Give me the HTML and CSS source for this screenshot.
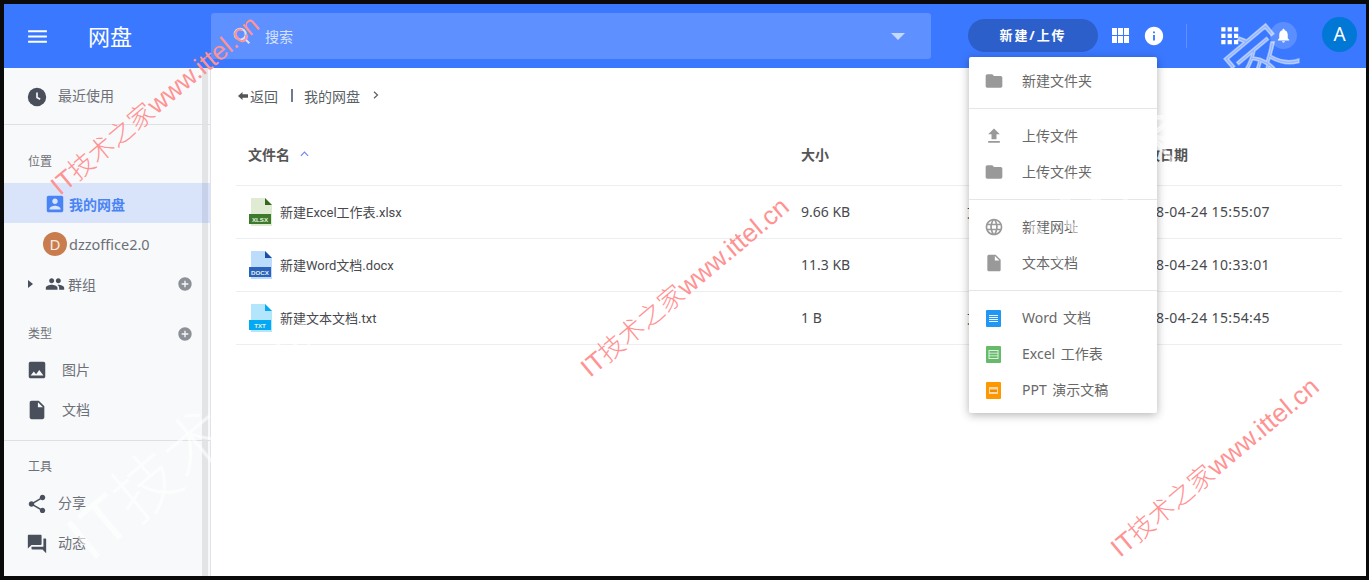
FILE: index.html
```html
<!DOCTYPE html>
<html lang="en">
<head>
  <meta charset="UTF-8">
  <title>网盘</title>
  <link rel="stylesheet" href="styles.css">
</head>
<body>
<svg class="defs">
  <symbol id="i-menu" viewBox="0 0 24 24"><path d="M3 18h18v-2H3v2zm0-5h18v-2H3v2zm0-7v2h18V6H3z"/></symbol>
  <symbol id="i-box" viewBox="0 0 24 24"><path d="M3 5v14c0 1.1.89 2 2 2h14c1.1 0 2-.9 2-2V5c0-1.1-.9-2-2-2H5c-1.11 0-2 .9-2 2zm12 4c0 1.66-1.34 3-3 3s-3-1.34-3-3 1.34-3 3-3 3 1.34 3 3zm-9 8c0-2 4-3.1 6-3.1s6 1.1 6 3.1v1H6v-1z"/></symbol>
  <symbol id="i-people" viewBox="0 0 24 24"><path d="M16 11c1.66 0 2.99-1.34 2.99-3S17.66 5 16 5c-1.66 0-3 1.34-3 3s1.34 3 3 3zm-8 0c1.66 0 2.99-1.34 2.99-3S9.66 5 8 5C6.34 5 5 6.34 5 8s1.34 3 3 3zm0 2c-2.33 0-7 1.17-7 3.5V19h14v-2.5c0-2.33-4.67-3.5-7-3.5zm8 0c-.29 0-.62.02-.97.05 1.16.84 1.97 1.97 1.97 3.45V19h6v-2.5c0-2.33-4.67-3.5-7-3.5z"/></symbol>
  <symbol id="i-add" viewBox="0 0 24 24"><path d="M12 2C6.48 2 2 6.48 2 12s4.48 10 10 10 10-4.48 10-10S17.52 2 12 2zm5 11h-4v4h-2v-4H7v-2h4V7h2v4h4v2z"/></symbol>
  <symbol id="i-photo" viewBox="0 0 24 24"><path d="M21 19V5c0-1.1-.9-2-2-2H5c-1.1 0-2 .9-2 2v14c0 1.1.9 2 2 2h14c1.1 0 2-.9 2-2zM8.5 13.5l2.5 3.01L14.5 12l4.5 6H5l3.5-4.5z"/></symbol>
  <symbol id="i-file" viewBox="0 0 24 24"><path d="M6 2c-1.1 0-1.99.9-1.99 2L4 20c0 1.1.89 2 1.99 2H18c1.1 0 2-.9 2-2V8l-6-6H6zm7 7V3.5L18.5 9H13z"/></symbol>
  <symbol id="i-share" viewBox="0 0 24 24"><path d="M18 16.08c-.76 0-1.44.3-1.96.77L8.91 12.7c.05-.23.09-.46.09-.7s-.04-.47-.09-.7l7.05-4.11c.54.5 1.25.81 2.04.81 1.66 0 3-1.34 3-3s-1.34-3-3-3-3 1.34-3 3c0 .24.04.47.09.7L8.04 9.81C7.5 9.31 6.79 9 6 9c-1.66 0-3 1.34-3 3s1.34 3 3 3c.79 0 1.5-.31 2.04-.81l7.12 4.16c-.05.21-.08.43-.08.65 0 1.61 1.31 2.92 2.92 2.92s2.92-1.31 2.92-2.92-1.31-2.92-2.92-2.92z"/></symbol>
  <symbol id="i-forum" viewBox="0 0 24 24"><path d="M21 6h-2v9H6v2c0 .55.45 1 1 1h11l4 4V7c0-.55-.45-1-1-1zm-4 6V3c0-.55-.45-1-1-1H3c-.55 0-1 .45-1 1v14l4-4h10c.55 0 1-.45 1-1z"/></symbol>
  <symbol id="i-folder" viewBox="0 0 24 24"><path d="M10 4H4c-1.1 0-1.99.9-1.99 2L2 18c0 1.1.9 2 2 2h16c1.1 0 2-.9 2-2V8c0-1.1-.9-2-2-2h-8l-2-2z"/></symbol>
  <symbol id="i-upload" viewBox="0 0 24 24"><path d="M9 16h6v-6h4l-7-7-7 7h4zm-4 2h14v2H5z"/></symbol>
  <symbol id="i-globe" viewBox="0 0 24 24"><path d="M11.99 2C6.47 2 2 6.48 2 12s4.47 10 9.99 10C17.52 22 22 17.52 22 12S17.52 2 11.99 2zm6.93 6h-2.95c-.32-1.25-.78-2.45-1.38-3.56 1.84.63 3.37 1.91 4.33 3.56zM12 4.04c.83 1.2 1.48 2.53 1.91 3.96h-3.82c.43-1.43 1.08-2.76 1.91-3.96zM4.26 14C4.1 13.36 4 12.69 4 12s.1-1.36.26-2h3.38c-.08.66-.14 1.32-.14 2 0 .68.06 1.34.14 2H4.26zm.82 2h2.95c.32 1.25.78 2.45 1.38 3.56-1.84-.63-3.37-1.9-4.33-3.56zm2.95-8H5.08c.96-1.66 2.49-2.93 4.33-3.56C8.81 5.55 8.35 6.75 8.03 8zM12 19.96c-.83-1.2-1.48-2.53-1.91-3.96h3.82c-.43 1.43-1.08 2.76-1.91 3.96zM14.34 14H9.66c-.09-.66-.16-1.32-.16-2 0-.68.07-1.35.16-2h4.68c.09.65.16 1.32.16 2 0 .68-.07 1.34-.16 2zm.25 5.56c.6-1.11 1.06-2.31 1.38-3.56h2.95c-.96 1.65-2.49 2.93-4.33 3.56zM16.36 14c.08-.66.14-1.32.14-2 0-.68-.06-1.34-.14-2h3.38c.16.64.26 1.31.26 2s-.1 1.36-.26 2h-3.38z"/></symbol>
  <symbol id="i-module" viewBox="0 0 17 15"><path d="M0 0h5v7H0zM6 0h5v7H6zM12 0h5v7h-5zM0 8h5v7H0zM6 8h5v7H6zM12 8h5v7h-5z"/></symbol>
  <symbol id="i-info" viewBox="0 0 24 24"><path d="M12 2C6.48 2 2 6.48 2 12s4.48 10 10 10 10-4.48 10-10S17.52 2 12 2zm1 15h-2v-6h2v6zm0-8h-2V7h2v2z"/></symbol>
  <symbol id="i-apps" viewBox="0 0 24 24"><path d="M4 8h4V4H4v4zm6 12h4v-4h-4v4zm-6 0h4v-4H4v4zm0-6h4v-4H4v4zm6 0h4v-4h-4v4zm6-10v4h4V4h-4zm-6 4h4V4h-4v4zm6 6h4v-4h-4v4zm0 6h4v-4h-4v4z"/></symbol>
  <symbol id="i-bell" viewBox="0 0 24 24"><path d="M12 22c1.1 0 2-.9 2-2h-4c0 1.1.89 2 2 2zm6-6v-5c0-3.07-1.64-5.64-4.5-6.32V4c0-.83-.67-1.5-1.5-1.5s-1.5.67-1.5 1.5v.68C7.63 5.36 6 7.92 6 11v5l-2 2v1h16v-1l-2-2z"/></symbol>
</svg>

<div class="app">
  <header class="topbar">
    <svg class="menu-btn"><use href="#i-menu"/></svg>
    <div class="logo">网盘</div>
    <div class="search">
      <svg class="search-icon" viewBox="0 0 24 24"><circle cx="10" cy="10" r="6" fill="none" stroke="currentColor" stroke-width="2.2"/><path d="M14.5 14.5 20 20" stroke="currentColor" stroke-width="2.2"/></svg>
      <span class="search-text">搜索</span>
      <span class="search-caret"></span>
    </div>
    <div class="new-btn">新建/上传</div>
    <svg class="module-icon"><use href="#i-module"/></svg>
    <svg class="top-icon info"><use href="#i-info"/></svg>
    <span class="top-sep"></span>
    <svg class="apps"><use href="#i-apps"/></svg>
    <span class="bell"><svg><use href="#i-bell"/></svg></span>
    <span class="avatar">A</span>
  </header>

  <div class="content">
    <aside class="sidebar">
      <span class="scroll"></span>
      <div class="side-row recent">
        <svg class="side-icon" viewBox="0 0 24 24"><circle cx="12" cy="12" r="10" fill="currentColor"/><path d="M12 7v5.5l3.5 2" fill="none" stroke="#f8f9fb" stroke-width="1.8"/></svg>
        <span>最近使用</span>
      </div>
      <div class="side-line"></div>
      <div class="side-title places">位置</div>
      <div class="side-row active">
        <svg class="box-icon"><use href="#i-box"/></svg>
        <span>我的网盘</span>
      </div>
      <div class="side-row org">
        <span class="org-badge">D</span>
        <span>dzzoffice2.0</span>
      </div>
      <div class="side-row group">
        <span class="tri"></span>
        <svg class="people-icon"><use href="#i-people"/></svg>
        <span>群组</span>
        <svg class="add-icon"><use href="#i-add"/></svg>
      </div>
      <div class="side-title types">
        <span>类型</span>
        <svg class="add-icon"><use href="#i-add"/></svg>
      </div>
      <div class="side-row wide">
        <svg class="side-icon"><use href="#i-photo"/></svg>
        <span>图片</span>
      </div>
      <div class="side-row wide">
        <svg class="side-icon"><use href="#i-file"/></svg>
        <span>文档</span>
      </div>
      <div class="side-line tools-line"></div>
      <div class="side-title tools">工具</div>
      <div class="side-row tool">
        <svg class="side-icon"><use href="#i-share"/></svg>
        <span>分享</span>
      </div>
      <div class="side-row tool">
        <svg class="side-icon"><use href="#i-forum"/></svg>
        <span>动态</span>
      </div>
    </aside>

    <main class="main">
      <div class="crumbs">
        <svg class="back" viewBox="0 0 10 10"><path d="M0 5 4.5 1V3.2H10V6.8H4.5V9z"/></svg>
        <span>返回</span>
        <span class="crumb-sep"></span>
        <span>我的网盘</span>
        <svg class="crumb-next" viewBox="0 0 6 8"><path d="M1 .8 4.5 4 1 7.2" fill="none" stroke="currentColor" stroke-width="1.2"/></svg>
      </div>

      <div class="row head">
        <div class="c-name">文件名 <svg class="sort" viewBox="0 0 10 6"><path d="M1 5l4-4 4 4" fill="none" stroke="currentColor" stroke-width="1.3"/></svg></div>
        <div class="c-size">大小</div>
        <div class="c-type hidden-type">类型</div>
        <div class="c-date">修改日期</div>
      </div>
      <div class="row">
        <div class="c-name">
          <svg class="ficon" viewBox="0 0 24 28"><path d="M2 0h14l7 7v21H2z" fill="#e0ebd3"/><path d="M16 0l7 7h-7z" fill="#33691e"/><rect x="0" y="16" width="22" height="10" fill="#3d7a2c"/><text x="11" y="23.5" class="ftext">XLSX</text></svg>
          <span>新建Excel工作表.xlsx</span>
        </div>
        <div class="c-size">9.66 KB</div>
        <div class="c-type">文件</div>
        <div class="c-date">2018-04-24 15:55:07</div>
      </div>
      <div class="row">
        <div class="c-name">
          <svg class="ficon" viewBox="0 0 24 28"><path d="M2 0h14l7 7v21H2z" fill="#bbdcfb"/><path d="M16 0l7 7h-7z" fill="#1a4ea3"/><rect x="0" y="16" width="22" height="10" fill="#2a62bd"/><text x="11" y="23.5" class="ftext">DOCX</text></svg>
          <span>新建Word文档.docx</span>
        </div>
        <div class="c-size">11.3 KB</div>
        <div class="c-type hidden-type">文件</div>
        <div class="c-date">2018-04-24 10:33:01</div>
      </div>
      <div class="row">
        <div class="c-name">
          <svg class="ficon" viewBox="0 0 24 28"><path d="M2 0h14l7 7v21H2z" fill="#b3e5fc"/><path d="M16 0l7 7h-7z" fill="#03a9f4"/><rect x="0" y="16" width="22" height="10" fill="#03a9f4"/><text x="11" y="23.5" class="ftext">TXT</text></svg>
          <span>新建文本文档.txt</span>
        </div>
        <div class="c-size">1 B</div>
        <div class="c-type">文件</div>
        <div class="c-date">2018-04-24 15:54:45</div>
      </div>
    </main>
  </div>

  <div class="dropdown">
    <div class="dd-group">
      <div class="dd-item"><svg class="dd-icon"><use href="#i-folder"/></svg><span>新建文件夹</span></div>
    </div>
    <div class="dd-group">
      <div class="dd-item"><svg class="dd-icon"><use href="#i-upload"/></svg><span>上传文件</span></div>
      <div class="dd-item"><svg class="dd-icon"><use href="#i-folder"/></svg><span>上传文件夹</span></div>
    </div>
    <div class="dd-group">
      <div class="dd-item"><svg class="dd-icon"><use href="#i-globe"/></svg><span>新建网址</span></div>
      <div class="dd-item"><svg class="dd-icon"><use href="#i-file"/></svg><span>文本文档</span></div>
    </div>
    <div class="dd-group last">
      <div class="dd-item">
        <svg class="doc-icon" viewBox="0 0 15 17"><rect width="15" height="17" rx="1" fill="#2196f3"/><path d="M3 5.5h9M3 7.5h9M3 9.5h9M3 11.5h9" stroke="#fff" stroke-width=".9"/></svg>
        <span>Word 文档</span>
      </div>
      <div class="dd-item">
        <svg class="doc-icon" viewBox="0 0 15 17"><rect width="15" height="17" rx="1" fill="#66bb6a"/><rect x="3" y="4.5" width="9" height="8" fill="none" stroke="#dff1df"/><path d="M3 7.2h9M3 9.8h9" stroke="#dff1df" stroke-width=".9"/></svg>
        <span>Excel 工作表</span>
      </div>
      <div class="dd-item">
        <svg class="doc-icon" viewBox="0 0 15 17"><rect width="15" height="17" rx="1" fill="#ff9800"/><rect x="3" y="5" width="9" height="7" fill="#ffd9a6"/><rect x="4" y="7.5" width="7" height="2.5" fill="#f58a00"/></svg>
        <span>PPT 演示文稿</span>
      </div>
    </div>
  </div>

  <div class="mark big-left">IT技术之家</div>
  <div class="mark big-right">IT技术之家</div>
  <div class="mark red one">IT技术之家www.ittel.cn</div>
  <div class="mark red two">IT技术之家www.ittel.cn</div>
  <div class="mark red three">IT技术之家www.ittel.cn</div>
</div>
</body>
</html>
```

FILE: styles.css
```css
html, body {
  margin: 0;
  height: 100%;
}
body {
  background: #0a0a0a;
  padding: 4px 3px 4px 4px;
  box-sizing: border-box;
  overflow: hidden;
  font-family: "Noto Sans", "Noto Sans CJK SC", sans-serif;
  font-size: 14px;
  color: #555;
}
.defs {
  display: none;
}
.app {
  height: 100%;
  display: flex;
  flex-direction: column;
  background: #fff;
  overflow: hidden;
}
svg {
  fill: currentColor;
  flex: none;
}

/* top bar */
.topbar {
  height: 64px;
  flex: none;
  background: #3a78ff;
  color: #fff;
  display: flex;
  align-items: center;
}
.menu-btn {
  width: 25px;
  height: 25px;
  margin-left: 21px;
}
.logo {
  font-size: 22px;
  width: 123px;
  margin-left: 38px;
  line-height: 30px;
}
.search {
  width: 720px;
  height: 46px;
  background: #5e90ff;
  border-radius: 3px;
  display: flex;
  align-items: center;
  color: #d6e3ff;
}
.search-icon {
  width: 22px;
  height: 22px;
  margin-left: 20px;
}
.search-text {
  margin-left: 12px;
  flex: 1;
}
.search-caret {
  border: 7px solid transparent;
  border-top: 7px solid #c5d8ff;
  border-bottom: 0;
  margin-right: 26px;
}
.new-btn {
  width: 130px;
  height: 33px;
  margin-left: 37px;
  background: #2d5fcb;
  border-radius: 17px;
  font-weight: 700;
  font-size: 13px;
  letter-spacing: 1.9px;
  line-height: 33px;
  text-align: center;
  margin-top: -1px;
}
.module-icon {
  width: 17px;
  height: 15px;
  margin-left: 14px;
  margin-top: -1px;
}
.top-icon {
  width: 22px;
  height: 22px;
}
.top-icon.info {
  margin-left: 14px;
  margin-top: -1px;
}
.top-sep {
  width: 1px;
  height: 24px;
  background: #5e90ff;
  margin-left: 21px;
}
.apps {
  width: 25.5px;
  height: 25.5px;
  margin-left: 30px;
  margin-top: -1px;
}
.bell {
  width: 27px;
  height: 27px;
  margin-left: 27.5px;
  margin-top: -1px;
  border-radius: 50%;
  background: rgba(255, 255, 255, 0.17);
  display: flex;
  align-items: center;
  justify-content: center;
}
.bell svg {
  width: 17px;
  height: 17px;
}
.avatar {
  width: 35px;
  height: 35px;
  margin-left: 25px;
  margin-top: -3px;
  border-radius: 50%;
  background: #0278d6;
  font-size: 19px;
  line-height: 35px;
  text-align: center;
}

/* sidebar */
.content {
  flex: 1;
  display: flex;
  min-height: 0;
}
.sidebar {
  width: 206px;
  flex: none;
  position: relative;
  background: #f8f9fb;
  border-right: 1px solid #e2e3e6;
  color: #6d7076;
  overflow: hidden;
}
.scroll {
  position: absolute;
  top: 0;
  bottom: 0;
  right: 2px;
  width: 6px;
  background: #e3e4e6;
}
.sidebar .side-row, .sidebar .side-title, .sidebar .side-line {
  position: relative;
}
.side-row {
  display: flex;
  align-items: center;
  height: 40px;
  padding-left: 22px;
  box-sizing: border-box;
}
.side-icon {
  width: 22px;
  height: 22px;
  color: #4a4f5c;
}
.recent {
  height: 56px;
}
.recent span, .tool span {
  margin-left: 10px;
}
.recent span {
  margin-top: -2px;
}
.recent .side-icon, .wide .side-icon {
  margin-top: 2px;
}
.tool .side-icon {
  margin-top: 4px;
}
.side-line {
  height: 1px;
  background: #dfe0e3;
}
.side-title {
  font-size: 12px;
  padding-left: 24px;
  line-height: 20px;
  display: flex;
  align-items: center;
}
.places {
  margin-top: 27px;
  margin-bottom: 11px;
}
.active {
  background: rgba(58, 120, 255, 0.16);
  color: #4a84f4;
  font-weight: 700;
  padding-left: 40px;
  padding-top: 2px;
}
.box-icon {
  width: 22px;
  height: 22px;
  margin-top: -1px;
  margin-right: 3px;
}
.org {
  padding-left: 39px;
  padding-top: 2px;
  color: #6d7076;
  font-size: 14.5px;
}
.org-badge {
  width: 24px;
  height: 24px;
  margin-right: 2px;
  margin-top: -1px;
  border-radius: 50%;
  background: #c97d4e;
  color: #f8ece2;
  font-size: 15px;
  line-height: 24px;
  text-align: center;
}
.group {
  height: 42px;
  padding-left: 24px;
  color: #6d7076;
}
.tri {
  border: 4px solid transparent;
  border-left: 5px solid #4a4f5c;
  border-right: 0;
  margin-right: 12px;
}
.people-icon {
  width: 20px;
  height: 20px;
  color: #4a4f5c;
  margin-right: 3px;
}
.add-icon {
  width: 16px;
  height: 16px;
  color: #8d9096;
  position: absolute;
  left: 173px;
}
.types {
  margin-top: 19px;
  height: 20px;
}
.types + .wide {
  margin-top: 5px;
}
.wide span {
  margin-left: 14px;
}
.tools-line {
  margin-top: 11px;
}
.tools {
  margin-top: 16px;
  margin-bottom: 5px;
}

/* file list */
.main {
  flex: 1;
  min-width: 0;
  padding: 0 24px 0 25px;
  color: #444;
}
.crumbs {
  height: 57px;
  padding: 0 0 2px 2px;
  box-sizing: border-box;
  display: flex;
  align-items: center;
  font-size: 13px;
  color: #5a5f66;
}
.back {
  width: 10px;
  height: 10px;
  margin-right: 2px;
  color: #555;
}
.crumb-sep {
  width: 2px;
  height: 13px;
  background: #6b7c92;
  margin: 0 11px 0 13px;
}
.crumbs span:not(.crumb-sep) {
  font-size: 14px;
}
.crumb-next {
  width: 6px;
  height: 8px;
  margin-left: 13px;
  margin-top: -2px;
}
.row {
  display: grid;
  grid-template-columns: 553px 166px 165px 1fr;
  height: 50px;
  padding: 0 0 2px 12px;
  border-bottom: 1px solid #eceef0;
  align-items: center;
}
.row.head {
  height: 58px;
  font-weight: 700;
  color: #555;
}
.c-name {
  display: flex;
  align-items: center;
}
.row:not(.head) .c-name span {
  margin-left: 7px;
  margin-top: 1px;
  font-size: 13px;
  font-family: "Roboto", "Noto Sans CJK SC", sans-serif;
}
.row:not(.head) {
  color: #48494d;
}
.sort {
  width: 9px;
  height: 6px;
  margin-left: 10px;
  color: #6f86f5;
}
.ficon {
  width: 24px;
  height: 28px;
  margin-left: 1px;
  margin-top: 2px;
}
.ftext {
  fill: #e6f2e0;
  font-family: "Liberation Sans", sans-serif;
  font-size: 6.2px;
  font-weight: 700;
  text-anchor: middle;
}
.hidden-type {
  padding-left: 12px;
}
.c-date {
  letter-spacing: 0.35px;
  margin-left: -1px;
}
.head .c-date {
  letter-spacing: 0;
  margin-left: 0;
}

/* new/upload menu */
.dropdown {
  position: absolute;
  left: 969px;
  top: 57px;
  width: 188px;
  background: #fff;
  border-radius: 2px;
  box-shadow: 0 2px 10px rgba(0, 0, 0, 0.3);
  color: #686868;
}
.dd-group {
  padding: 6px 0 9px;
  border-bottom: 1px solid #e6e6e6;
}
.dd-group + .dd-group {
  padding-top: 9px;
}
.dd-group.last {
  border-bottom: 0;
  padding-bottom: 5px;
}
.dd-item {
  height: 36px;
  display: flex;
  align-items: center;
  padding-left: 15px;
}
.dd-item span {
  margin-left: 18px;
  margin-top: -2px;
  word-spacing: 2px;
}
.dd-icon {
  width: 20px;
  height: 20px;
  color: #999;
}
.doc-icon {
  width: 15px;
  height: 17px;
  margin-left: 2px;
  margin-right: 3px;
}

/* watermarks */
.mark {
  position: absolute;
  white-space: nowrap;
  font-family: "Liberation Sans", "Noto Sans CJK SC", sans-serif;
  font-weight: 300;
  transform: translate(-50%, -50%) rotate(-40deg);
}
.red {
  font-size: 25.8px;
  color: #ff9292;
}
.one {
  left: 153px;
  top: 103px;
}
.two {
  left: 683px;
  top: 285px;
}
.three {
  left: 1213px;
  top: 465px;
}
.big-left {
  left: 196px;
  top: 437px;
  font-size: 66px;
  color: rgba(255, 255, 255, 0.6);
}
.big-right {
  left: 1159px;
  top: 139px;
  font-size: 66px;
  color: rgba(255, 255, 255, 0.45);
  -webkit-text-stroke: 1.5px rgba(255, 255, 255, 0.45);
}
```
